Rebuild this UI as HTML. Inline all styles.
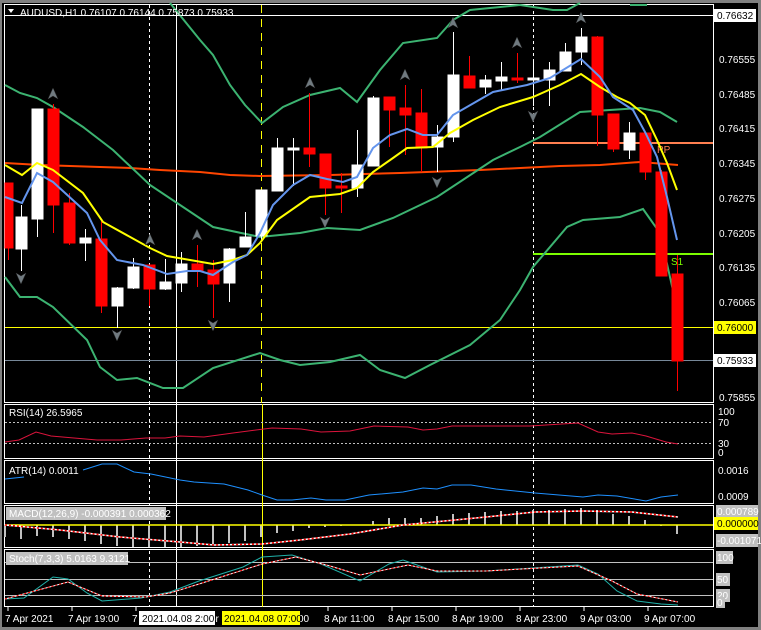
<!DOCTYPE html>
<html><head><meta charset="utf-8"><style>
html,body{margin:0;padding:0;background:#000;width:761px;height:630px;overflow:hidden}
svg{display:block}
text{font-family:"Liberation Sans",sans-serif;font-size:10px}
</style></head><body>
<svg width="761" height="630" viewBox="0 0 761 630" xmlns="http://www.w3.org/2000/svg">
<rect width="761" height="630" fill="#000"/>
<rect x="0" y="0" width="761" height="3" fill="#808080"/>
<rect x="0" y="0" width="2" height="630" fill="#808080"/>
<rect x="0" y="627" width="761" height="3" fill="#808080"/>
<rect x="758" y="0" width="3" height="630" fill="#808080"/>

<!-- main frame -->
<g fill="none" stroke="#fff" stroke-width="1">
<rect x="4.5" y="4.5" width="709" height="398"/>
<rect x="4.5" y="404.5" width="709" height="54"/>
<rect x="4.5" y="460.5" width="709" height="43"/>
<rect x="4.5" y="505.5" width="709" height="42"/>
<rect x="4.5" y="549.5" width="709" height="57"/>
</g>

<!-- vertical lines -->
<g stroke-width="1">
<line x1="149.5" y1="5" x2="149.5" y2="607" stroke="#fff" stroke-dasharray="3,3"/>
<line x1="176.5" y1="5" x2="176.5" y2="607" stroke="#fff"/>
<line x1="261.5" y1="5" x2="261.5" y2="403" stroke="#ff0" stroke-dasharray="8,6"/>
<line x1="262.5" y1="404" x2="262.5" y2="607" stroke="#ff0"/>
<line x1="533.5" y1="5" x2="533.5" y2="607" stroke="#fff" stroke-dasharray="3,3"/>
</g>

<!-- horizontal lines main -->
<line x1="5" y1="15.5" x2="713" y2="15.5" stroke="#fff"/>
<line x1="5" y1="327.5" x2="713" y2="327.5" stroke="#ff0"/>
<line x1="5" y1="360.5" x2="713" y2="360.5" stroke="#778899"/>
<line x1="533" y1="143" x2="713" y2="143" stroke="#ff7f50" stroke-width="2"/>
<line x1="533" y1="254" x2="713" y2="254" stroke="#7cfc00" stroke-width="2"/>
<text x="657" y="153" fill="#ff7f50" font-size="11">PP</text>
<text x="671" y="265" fill="#7cfc00" font-size="11">S1</text>

<!-- MA200 -->
<polyline fill="none" stroke="#ff4500" stroke-width="2" points="5,163 40,165 70,166 100,167 130,168 160,170 200,172 230,175 260,176 330,175 400,173 480,170 560,166 600,165 640,162 678,165"/>

<!-- Bollinger -->
<g fill="none" stroke="#3cb371" stroke-width="2">
<polyline points="170,3 200,40 213,55 230,85 245,105 262,123 283,107 310,95 340,88 357,102 380,70 403,43 437,38 453,20 470,10 520,5 553,10 567,10 580,3"/>
<polyline points="630,5 647,5"/>
<polyline points="5,85 20,93 37,98 53,107 83,127 113,150 150,185 213,227 260,237 300,233 327,228 360,230 393,218 437,197 493,160 520,147 540,137 580,112 640,108 660,112 677,122"/>
<polyline points="5,277 20,297 37,297 53,307 87,340 100,367 117,380 137,378 163,388 183,388 213,368 260,353 280,360 300,365 330,362 360,355 380,370 405,378 430,365 470,345 500,320 520,290 533,267 567,227 583,220 620,217 643,209 660,233 677,308"/>
</g>

<!-- candles -->
<g id="candles">
<g stroke="#ff0000" fill="#ff0000">
<line x1="8.5" y1="183" x2="8.5" y2="260"/><rect x="5" y="183" width="8" height="65"/>
<line x1="53.5" y1="104" x2="53.5" y2="233"/><rect x="48" y="109" width="11" height="96"/>
<line x1="69.5" y1="193" x2="69.5" y2="245"/><rect x="64" y="203" width="11" height="40"/>
<line x1="101.5" y1="221" x2="101.5" y2="313"/><rect x="96" y="239" width="11" height="67"/>
<line x1="149.5" y1="265" x2="149.5" y2="306"/><rect x="144" y="265" width="11" height="24"/>
<line x1="197.5" y1="245" x2="197.5" y2="287"/><rect x="192" y="264" width="11" height="7"/>
<line x1="213.5" y1="260" x2="213.5" y2="318"/><rect x="208" y="270" width="11" height="14"/>
<line x1="309.5" y1="93" x2="309.5" y2="167"/><rect x="304" y="148" width="11" height="6"/>
<line x1="325.5" y1="154" x2="325.5" y2="215"/><rect x="320" y="154" width="11" height="34"/>
<line x1="341.5" y1="173" x2="341.5" y2="213"/><rect x="336" y="186" width="11" height="2"/>
<line x1="389.5" y1="97" x2="389.5" y2="147"/><rect x="384" y="97" width="11" height="13"/>
<line x1="405.5" y1="85" x2="405.5" y2="155"/><rect x="400" y="108" width="11" height="7"/>
<line x1="421.5" y1="89" x2="421.5" y2="172"/><rect x="416" y="113" width="11" height="35"/>
<line x1="469.5" y1="56" x2="469.5" y2="88"/><rect x="464" y="76" width="11" height="12"/>
<line x1="517.5" y1="53" x2="517.5" y2="83"/><rect x="512" y="78" width="11" height="2"/>
<line x1="597.5" y1="36" x2="597.5" y2="146"/><rect x="592" y="37" width="11" height="78"/>
<line x1="613.5" y1="114" x2="613.5" y2="152"/><rect x="608" y="114" width="11" height="35"/>
<line x1="645.5" y1="133" x2="645.5" y2="180"/><rect x="640" y="133" width="11" height="39"/>
<line x1="661.5" y1="170" x2="661.5" y2="276"/><rect x="656" y="172" width="11" height="104"/>
<line x1="677.5" y1="255" x2="677.5" y2="391"/><rect x="672" y="274" width="11" height="87"/>
</g>
<g stroke="#fff" fill="#fff">
<line x1="21.5" y1="205" x2="21.5" y2="271"/><rect x="16" y="217" width="11" height="32"/>
<line x1="37.5" y1="109" x2="37.5" y2="237"/><rect x="32" y="109" width="11" height="110"/>
<line x1="85.5" y1="229" x2="85.5" y2="261"/><rect x="80" y="238" width="11" height="5"/>
<line x1="117.5" y1="287" x2="117.5" y2="328"/><rect x="112" y="288" width="11" height="18"/>
<line x1="133.5" y1="258" x2="133.5" y2="289"/><rect x="128" y="267" width="11" height="21"/>
<line x1="165.5" y1="259" x2="165.5" y2="290"/><rect x="160" y="282" width="11" height="7"/>
<line x1="181.5" y1="252" x2="181.5" y2="292"/><rect x="176" y="264" width="11" height="19"/>
<line x1="229.5" y1="248" x2="229.5" y2="302"/><rect x="224" y="249" width="11" height="34"/>
<line x1="245.5" y1="212" x2="245.5" y2="247"/><rect x="240" y="237" width="11" height="10"/>
<line x1="261.5" y1="190" x2="261.5" y2="240"/><rect x="256" y="190" width="11" height="46"/>
<line x1="277.5" y1="138" x2="277.5" y2="191"/><rect x="272" y="148" width="11" height="43"/>
<line x1="293.5" y1="138" x2="293.5" y2="186"/><rect x="288" y="148" width="11" height="2"/>
<line x1="357.5" y1="130" x2="357.5" y2="197"/><rect x="352" y="165" width="11" height="23"/>
<line x1="373.5" y1="96" x2="373.5" y2="166"/><rect x="368" y="98" width="11" height="68"/>
<line x1="437.5" y1="125" x2="437.5" y2="172"/><rect x="432" y="137" width="11" height="10"/>
<line x1="453.5" y1="32" x2="453.5" y2="142"/><rect x="448" y="75" width="11" height="62"/>
<line x1="485.5" y1="75" x2="485.5" y2="94"/><rect x="480" y="80" width="11" height="7"/>
<line x1="501.5" y1="62" x2="501.5" y2="90"/><rect x="496" y="77" width="11" height="4"/>
<line x1="533.5" y1="59" x2="533.5" y2="106"/><rect x="528" y="78" width="11" height="2"/>
<line x1="549.5" y1="62" x2="549.5" y2="106"/><rect x="544" y="70" width="11" height="10"/>
<line x1="565.5" y1="43" x2="565.5" y2="71"/><rect x="560" y="52" width="11" height="19"/>
<line x1="581.5" y1="28" x2="581.5" y2="65"/><rect x="576" y="37" width="11" height="15"/>
<line x1="629.5" y1="122" x2="629.5" y2="159"/><rect x="624" y="133" width="11" height="17"/>
</g>
</g>

<!-- MAs -->
<polyline fill="none" stroke="#ffff00" stroke-width="2" points="5,165 22,175 37,163 53,170 83,193 103,222 150,248 167,256 213,264 233,260 247,255 260,243 277,220 310,197 340,194 357,188 373,172 393,158 407,148 433,147 450,133 473,120 500,107 533,97 560,85 581,74 600,87 617,97 630,103 645,115 657,140 667,163 677,190"/>
<polyline fill="none" stroke="#6495ed" stroke-width="2" points="5,197 22,203 37,173 53,182 87,213 100,240 117,260 143,265 167,274 187,271 200,271 213,275 233,262 247,255 260,233 273,205 293,185 310,175 327,179 343,182 357,177 373,148 390,135 407,129 423,135 437,135 453,115 493,92 527,85 550,78 581,59 600,77 613,97 633,110 645,132 657,157 667,197 677,240"/>

<!-- arrows -->
<g fill="#707a80" stroke="#333" stroke-width="0.5">
<path d="M53,88 l-5,11 l5,-3 l5,3z"/>
<path d="M150,234 l-5,11 l5,-3 l5,3z"/>
<path d="M197,229 l-5,11 l5,-3 l5,3z"/>
<path d="M310,77 l-5,11 l5,-3 l5,3z"/>
<path d="M405,69 l-5,11 l5,-3 l5,3z"/>
<path d="M453,17 l-5,11 l5,-3 l5,3z"/>
<path d="M517,37 l-5,11 l5,-3 l5,3z"/>
<path d="M581,12 l-5,11 l5,-3 l5,3z"/>
<path d="M21,284 l-5,-11 l5,3 l5,-3z"/>
<path d="M117,341 l-5,-11 l5,3 l5,-3z"/>
<path d="M213,331 l-5,-11 l5,3 l5,-3z"/>
<path d="M325,228 l-5,-11 l5,3 l5,-3z"/>
<path d="M437,188 l-5,-11 l5,3 l5,-3z"/>
<path d="M533,122 l-5,-11 l5,3 l5,-3z"/>
</g>

<!-- header -->
<path d="M8,9 l6,0 l-3,4z" fill="#fff"/>
<text x="20" y="16" fill="#fff">AUDUSD,H1  0.76107 0.76144 0.75873 0.75933</text>

<!-- right price axis -->
<g fill="#fff">
<text x="719" y="63">0.76555</text>
<text x="719" y="98">0.76485</text>
<text x="719" y="132">0.76415</text>
<text x="719" y="167">0.76345</text>
<text x="719" y="202">0.76275</text>
<text x="719" y="237">0.76205</text>
<text x="719" y="271">0.76135</text>
<text x="719" y="306">0.76065</text>
<text x="719" y="401">0.75855</text>
</g>
<rect x="714" y="9" width="42" height="13" fill="#fff"/>
<text x="717" y="19" fill="#000">0.76632</text>
<rect x="714" y="321" width="42" height="13" fill="#ff0"/>
<text x="717" y="331" fill="#000">0.76000</text>
<rect x="714" y="354" width="42" height="13" fill="#fff"/>
<text x="717" y="364" fill="#000">0.75933</text>

<!-- RSI -->
<line x1="5" y1="422.5" x2="713" y2="422.5" stroke="#c0c0c0" stroke-dasharray="2,2"/>
<line x1="5" y1="443.5" x2="713" y2="443.5" stroke="#c0c0c0" stroke-dasharray="2,2"/>
<polyline fill="none" stroke="#dc143c" stroke-width="1" points="5,442 19,440 36,432 51,436 97,440 121,440 146,438 165,438 180,436 204,437 233,433 272,428 301,429 321,432 350,431 374,426 408,427 423,430 437,429 452,426 530,426 578,423 598,432 612,434 632,433 646,436 666,442 678,444"/>
<text x="9" y="416" fill="#fff">RSI(14) 26.5965</text>
<g fill="#fff"><text x="718" y="415">100</text><text x="718" y="426">70</text><text x="718" y="447">30</text><text x="718" y="456">0</text></g>

<!-- ATR -->
<polyline fill="none" stroke="#1e90ff" stroke-width="1" points="5,479 24,477"/>
<polyline fill="none" stroke="#1e90ff" stroke-width="1" points="83,470 102,464 117,464 134,472 151,474 180,480 194,482 224,484 248,490 262,495 277,500 292,500 311,498 326,500 345,500 369,495 403,492 423,488 437,489 452,485 471,485 496,489 535,493 583,497 598,495 617,496 646,501 661,497 678,495"/>
<text x="9" y="474" fill="#fff">ATR(14) 0.0011</text>
<g fill="#fff"><text x="718" y="474">0.0016</text><text x="718" y="500">0.0009</text></g>

<!-- MACD -->
<g stroke="#c0c0c0" stroke-width="2">
<line x1="5" y1="525" x2="5" y2="537"/><line x1="21" y1="525" x2="21" y2="539"/><line x1="37" y1="525" x2="37" y2="536"/><line x1="53" y1="525" x2="53" y2="537"/><line x1="69" y1="525" x2="69" y2="539"/><line x1="85" y1="525" x2="85" y2="541"/><line x1="101" y1="525" x2="101" y2="544"/><line x1="117" y1="525" x2="117" y2="546"/><line x1="133" y1="525" x2="133" y2="547"/><line x1="149" y1="525" x2="149" y2="547"/><line x1="165" y1="525" x2="165" y2="547"/><line x1="181" y1="525" x2="181" y2="547"/><line x1="197" y1="525" x2="197" y2="546"/><line x1="213" y1="525" x2="213" y2="544"/><line x1="229" y1="525" x2="229" y2="543"/><line x1="245" y1="525" x2="245" y2="541"/><line x1="261" y1="525" x2="261" y2="537"/><line x1="277" y1="525" x2="277" y2="533"/><line x1="293" y1="525" x2="293" y2="531"/><line x1="309" y1="525" x2="309" y2="528"/><line x1="325" y1="525" x2="325" y2="527"/><line x1="341" y1="525" x2="341" y2="526"/>
<line x1="373" y1="525" x2="373" y2="521"/><line x1="389" y1="525" x2="389" y2="518"/><line x1="405" y1="525" x2="405" y2="518"/><line x1="421" y1="525" x2="421" y2="518"/><line x1="437" y1="525" x2="437" y2="516"/><line x1="453" y1="525" x2="453" y2="514"/><line x1="469" y1="525" x2="469" y2="513"/><line x1="485" y1="525" x2="485" y2="512"/><line x1="501" y1="525" x2="501" y2="511"/><line x1="517" y1="525" x2="517" y2="511"/><line x1="533" y1="525" x2="533" y2="510"/><line x1="549" y1="525" x2="549" y2="510"/><line x1="565" y1="525" x2="565" y2="509"/><line x1="581" y1="525" x2="581" y2="508"/><line x1="597" y1="525" x2="597" y2="510"/><line x1="613" y1="525" x2="613" y2="514"/><line x1="629" y1="525" x2="629" y2="516"/><line x1="645" y1="525" x2="645" y2="520"/><line x1="661" y1="525" x2="661" y2="526"/><line x1="677" y1="525" x2="677" y2="534"/>
</g>
<line x1="5" y1="525" x2="713" y2="525" stroke="#ff0" stroke-width="1.5"/>
<polyline fill="none" stroke="#fff" stroke-width="1.5" points="5,525 60,530 120,537 180,542 214,545 262,544 300,540 350,534 403,525 486,517 535,512 583,511 632,512 678,517"/>
<polyline fill="none" stroke="#ff0000" stroke-width="1.5" stroke-dasharray="2,2" points="5,525 60,530 120,537 180,542 214,545 262,544 300,540 350,534 403,525 486,517 535,512 583,511 632,512 678,517"/>
<rect x="6" y="507" width="160" height="13" fill="#c0c0c0"/>
<text x="9" y="517" fill="#fff">MACD(12,26,9) -0.000391 0.000362</text>
<rect x="716" y="505" width="42" height="13" fill="#c0c0c0"/><text x="717" y="515" fill="#fff">0.000789</text>
<rect x="714" y="517" width="44" height="13" fill="#ff0"/><text x="717" y="527" fill="#000">0.000000</text>
<rect x="716" y="534" width="42" height="13" fill="#c0c0c0"/><text x="717" y="544" fill="#fff">-0.001071</text>

<!-- Stoch -->
<g stroke="#c0c0c0" stroke-width="1">
<line x1="5" y1="562.5" x2="713" y2="562.5"/><line x1="5" y1="579.5" x2="713" y2="579.5"/><line x1="5" y1="595.5" x2="713" y2="595.5"/>
</g>
<polyline fill="none" stroke="#20b2aa" stroke-width="1" points="5,599 24,598 53,577 68,579 87,593 102,601 141,598 170,592 199,581 243,567 262,557 292,555 321,564 360,581 389,564 403,560 437,572 486,571 578,565 598,574 617,591 637,601 661,604 678,605"/>
<polyline fill="none" stroke="#fff" stroke-width="1" points="5,599 68,582 102,596 146,597 170,593 199,584 262,564 296,557 330,566 360,575 408,565 437,571 486,571 578,566 612,581 637,594 678,602"/>
<polyline fill="none" stroke="#ff0000" stroke-width="1" stroke-dasharray="2,2" points="5,599 68,582 102,596 146,597 170,593 199,584 262,564 296,557 330,566 360,575 408,565 437,571 486,571 578,566 612,581 637,594 678,602"/>
<rect x="6" y="552" width="122" height="13" fill="#c0c0c0"/>
<text x="9" y="562" fill="#fff">Stoch(7,3,3) 5.0163 9.3121</text>
<rect x="716" y="551" width="17" height="13" fill="#c0c0c0"/><text x="717" y="561" fill="#fff">100</text>
<rect x="716" y="573" width="14" height="13" fill="#c0c0c0"/><text x="717" y="583" fill="#fff">50</text>
<rect x="716" y="589" width="14" height="13" fill="#c0c0c0"/><text x="717" y="599" fill="#fff">20</text>
<rect x="716" y="597" width="9" height="11" fill="#c0c0c0"/><text x="717" y="606" fill="#fff">0</text>

<!-- time axis -->
<g stroke="#fff"><line x1="8" y1="607" x2="8" y2="611"/><line x1="72" y1="607" x2="72" y2="611"/><line x1="136" y1="607" x2="136" y2="611"/><line x1="328" y1="607" x2="328" y2="611"/><line x1="392" y1="607" x2="392" y2="611"/><line x1="456" y1="607" x2="456" y2="611"/><line x1="520" y1="607" x2="520" y2="611"/><line x1="584" y1="607" x2="584" y2="611"/><line x1="648" y1="607" x2="648" y2="611"/></g>
<g fill="#fff">
<text x="5" y="622">7 Apr 2021</text>
<text x="68" y="622">7 Apr 19:00</text>
<text x="132" y="622">7</text>
<text x="210" y="622">pr</text>
<text x="298" y="622">00</text>
<text x="324" y="622">8 Apr 11:00</text>
<text x="388" y="622">8 Apr 15:00</text>
<text x="452" y="622">8 Apr 19:00</text>
<text x="516" y="622">8 Apr 23:00</text>
<text x="580" y="622">9 Apr 03:00</text>
<text x="644" y="622">9 Apr 07:00</text>
</g>
<rect x="139" y="611" width="76" height="14" fill="#fff"/>
<text x="142" y="622" fill="#000">2021.04.08 2:00</text>
<rect x="222" y="611" width="78" height="14" fill="#ff0"/>
<text x="224" y="622" fill="#000">2021.04.08 07:00</text>
</svg>
</body></html>
